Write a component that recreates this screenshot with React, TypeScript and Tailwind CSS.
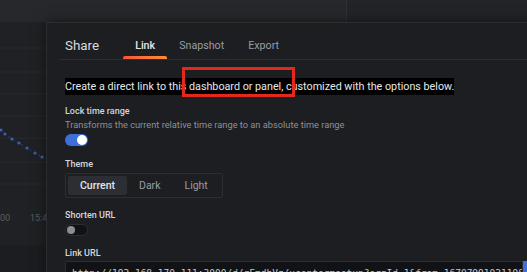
import React from "react";

const font = { fontFamily: "Roboto, 'Liberation Sans', sans-serif" };

function Toggle({ on }: { on: boolean }) {
  return on ? (
    <div className="flex h-[12px] w-[23px] items-center justify-end rounded-full bg-[#3d71d9] pr-[1px]">
      <div className="h-[10px] w-[10px] rounded-full bg-white" />
    </div>
  ) : (
    <div className="flex h-[12px] w-[23px] items-center justify-start rounded-full border border-[#2c2e33] bg-[#111216] pl-[1px]">
      <div className="h-[8px] w-[8px] rounded-full bg-[#8d8e93]" />
    </div>
  );
}

function Background() {
  const dots = [
    [1, 130],
    [5, 134],
    [12, 139],
    [19, 143],
    [27, 148],
    [35, 153],
    [42, 157],
  ];
  return (
    <div className="flex h-full w-full flex-col bg-[#202124]">
      <div className="flex h-[22px] w-full">
        <div className="h-full w-[346px] bg-[#27282b]" />
        <div className="h-full flex-1 border-l border-[#303134] bg-[#232427]" />
      </div>
      <div className="relative flex-1">
        <svg width="527" height="250" className="block">
          {[26, 50, 72, 94, 116, 140, 162].map((y) => (
            <line key={y} x1="0" x2="527" y1={y} y2={y} stroke="#2a2b2e" strokeWidth="1" />
          ))}
          {dots.map(([x, y], i) => (
            <circle key={i} cx={x} cy={y - 22} r="1.6" fill="#3c63b8" />
          ))}
          <polyline
            points={dots.map(([x, y]) => `${x},${y - 22}`).join(" ")}
            fill="none"
            stroke="#2f4f95"
            strokeWidth="0.8"
            strokeDasharray="2 3"
          />
          <text x="0" y="199" fill="#5b5c60" fontSize="9" fontFamily="Roboto, sans-serif">00</text>
          <text x="30" y="199" fill="#5b5c60" fontSize="9" fontFamily="Roboto, sans-serif">15:4</text>
          <rect x="0" y="223" width="527" height="30" fill="#1c1d20" />
        </svg>
      </div>
    </div>
  );
}

export default function App() {
  return (
    <div className="relative h-[272px] w-[527px] overflow-hidden" style={font}>
      <Background />
      <div className="absolute left-[46px] top-[22px] h-[300px] w-[520px] border border-[#2b2d31] bg-[#1c1e22] shadow-[0_0_12px_rgba(0,0,0,0.5)]">
        {/* header */}
        <div className="mx-[12px] flex h-[37px] items-stretch border-b border-[#2b2d31] pl-[6px]">
          <div className="self-center pt-[9px] text-[13.4px] leading-[16px] text-[#d9dadf]">Share</div>
          <div className="ml-[24px] flex items-stretch text-[10.7px]">
            <div className="flex flex-col justify-end">
              <div className="px-[12px] pb-[4px] font-medium leading-[13px] text-[#e4e5ea]">Link</div>
              <div className="h-[3px] rounded-t-[2px] bg-gradient-to-r from-[#f5543c] to-[#ff8d2e]" />
            </div>
            <div className="flex flex-col justify-end">
              <div className="px-[12px] pb-[7px] leading-[13px] text-[#9a9ca3]">Snapshot</div>
            </div>
            <div className="flex flex-col justify-end">
              <div className="px-[12px] pb-[7px] leading-[13px] text-[#9a9ca3]">Export</div>
            </div>
          </div>
        </div>
        {/* content */}
        <div className="flex flex-col items-start pl-[18px] pt-[18px]">
          <div className="relative flex">
            <span className="block whitespace-nowrap bg-black text-[10.75px] leading-[17px] text-[#e6e7ea]">
              Create a direct link to this dashboard or panel, customized with the options below.
            </span>
            <div className="absolute left-[117px] top-[-11px] h-[30px] w-[113px] border-[3px] border-[#e3281c]" />
          </div>
          <div className="mt-[9px] text-[9px] font-medium leading-[14px] text-[#d5d6db]">Lock time range</div>
          <div className="text-[9.25px] leading-[14px] text-[#8e9097]">
            Transforms the current relative time range to an absolute time range
          </div>
          <div className="mt-[2px]">
            <Toggle on />
          </div>
          <div className="mt-[11px] text-[9px] font-medium leading-[14px] text-[#d5d6db]">Theme</div>
          <div className="mt-[2px] flex h-[25px] w-[158px] items-stretch rounded-[2px] border border-[#2c2e33] p-[2px] text-[10.5px]">
            <div className="flex items-center rounded-[2px] bg-[#2c2e33] px-[12px] font-medium text-[#e4e5ea]">Current</div>
            <div className="flex items-center px-[12px] text-[#9a9ca3]">Dark</div>
            <div className="flex items-center px-[12px] text-[#9a9ca3]">Light</div>
          </div>
          <div className="mt-[10px] text-[9px] font-medium leading-[14px] text-[#d5d6db]">Shorten URL</div>
          <div className="mt-[2px]">
            <Toggle on={false} />
          </div>
          <div className="mt-[10px] text-[9px] font-medium leading-[14px] text-[#d5d6db]">Link URL</div>
          <div className="mt-[1px] flex h-[24px] items-stretch">
            <div
              className="w-[458px] overflow-hidden whitespace-nowrap rounded-l-[2px] border border-[#2c2e33] bg-[#111216] pl-[6px] pt-[5px] text-[9.5px] leading-[12px] text-[#c7c8cc]"
              style={{ fontFamily: "'DejaVu Sans Mono', 'Liberation Mono', monospace" }}
            >
              http://192.168.170.111:3000/d/rFmdhVz/ucentermsetup?orgId=1&amp;from=1670799102119&amp;t
            </div>
            <div className="w-[40px] bg-[#3d71d9]" />
          </div>
        </div>
      </div>
    </div>
  );
}
